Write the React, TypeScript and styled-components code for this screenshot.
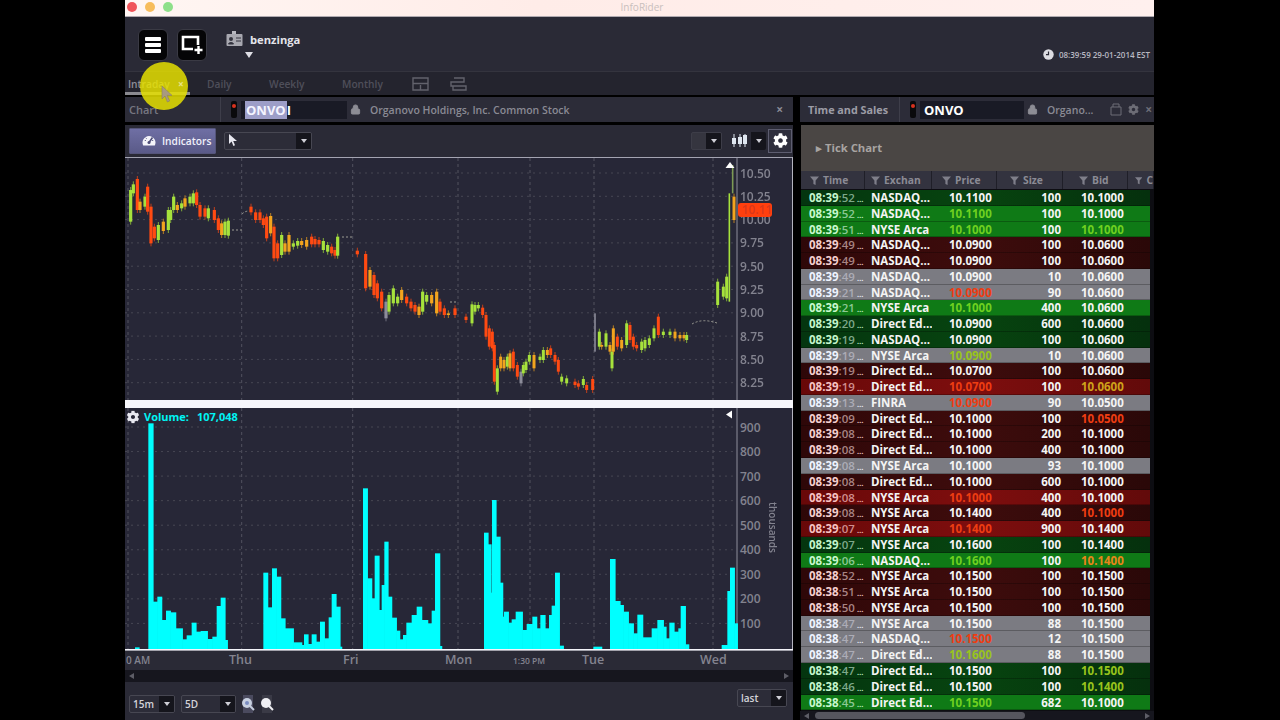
import React from "react";
import styled, { createGlobalStyle } from "styled-components";
import { Lock } from "lucide-react";
import { FaCog } from "react-icons/fa";

const Global = createGlobalStyle`
  html, body { margin: 0; padding: 0; background: #000; overflow: hidden; }
  body { font-family: "Open Sans", "Noto Sans", sans-serif; }
  * { box-sizing: border-box; }
`;

const Screen = styled.div`
  width: 1280px; height: 720px; background: #000; display: flex; justify-content: flex-start;
  padding-left: 125px; overflow: hidden; position: relative;
`;
const Win = styled.div`width: 1029px; height: 720px; display: flex; flex-direction: column; background: #000;`;

const TitleBar = styled.div`
  height: 17px; background: linear-gradient(90deg, #fff6f3, #ffece8 40%, #fff0ee); display: flex; align-items: center;
  position: relative; padding-left: 2px; gap: 8px; border-bottom: 1px solid #b0aab0;
`;
const Light = styled.span<{ $c: string }>`
  width: 10px; height: 10px; border-radius: 50%; background: ${p => p.$c}; filter: blur(.6px); margin-top: -2px;
`;
const WinTitle = styled.span`
  position: absolute; left: 0; right: 0; top: 0; text-align: center; font-size: 10px; line-height: 15px; color: #c9bfbd; padding-left: 5px;
`;

const Header = styled.div`
  height: 54px; background: #2a2a36; display: flex; align-items: flex-start; padding: 12px 4px 0 13px;
`;
const RoundBtn = styled.button`
  width: 30px; height: 32px; margin-right: 9px; border-radius: 6px; background: #050507; border: 1px solid #3a3a44;
  display: flex; align-items: center; justify-content: center; padding: 0;
`;
const Burger = styled.span`
  display: flex; flex-direction: column; gap: 2px;
  & > i { display: block; width: 16px; height: 4px; background: #fff; border-radius: 1px; }
`;
const User = styled.div`
  display: flex; flex-direction: column; margin-left: 10px; position: relative; padding-left: 24px; height: 30px;
`;
const UserRow = styled.span`
  font-weight: 700; font-size: 11.2px; line-height: 22px; color: #e4e4ea; position: relative;
`;
const IdIcon = styled.span`position: absolute; left: 0; top: 2px; line-height: 0;`;
const Drop = styled.span`
  width: 0; height: 0; border-left: 4px solid transparent; border-right: 4px solid transparent; border-top: 6px solid #dfdfe6; margin: 1px 0 0 -5px;
`;
const ClockBox = styled.div`
  margin-left: auto; display: flex; align-items: center; gap: 5px; color: #b9b9c2; font-size: 8px; padding-top: 20px; font-weight: 600;
`;

const Tabs = styled.div`
  height: 24px; background: #24242e; display: flex; align-items: center; position: relative; border-top: 1px solid #34343e;
  font-size: 10.2px; font-weight: 600;
`;
const Tab = styled.span<{ $w: number; $active?: boolean }>`
  width: ${p => p.$w}px; padding-left: 3px; color: ${p => (p.$active ? "#8f8f99" : "#4f4f5a")};
`;
const TabIcons = styled.span`display: flex; gap: 21px; margin-left: 11px; color: #62626c; line-height: 0;`;
const ActiveLine = styled.span`position: absolute; left: 0; bottom: 0; width: 65px; height: 3px; background: #8a8a90;`;

const Panes = styled.div`flex: 1; display: flex; margin-top: 2px; min-height: 0;`;
const LeftPane = styled.div`width: 668px; display: flex; flex-direction: column;`;
const RightPane = styled.div`width: 354px; margin-left: 7px; display: flex; flex-direction: column;`;

const PaneHead = styled.div`
  height: 25px; background: #2c2c38; display: flex; align-items: center; color: #83838d; font-size: 10.5px; font-weight: 600; margin-bottom: 3px;
`;
const PaneLabel = styled.span<{ $w: number; $bold?: boolean }>`
  width: ${p => p.$w}px; padding-left: ${p => (p.$bold ? 8 : 4)}px; height: 100%; line-height: 25px; border-right: 1px solid #3e3e4a;
  font-weight: ${p => (p.$bold ? 700 : 600)}; color: ${p => (p.$bold ? "#9c9ca6" : "#777781")};
  font-size: ${p => (p.$bold ? 10.8 : 11)}px;
`;
const Signal = styled.span`
  width: 6px; height: 17px; background: #0a0a0c; border-radius: 2px; margin: 0 4px 0 10px; display: flex; flex-direction: column; align-items: center; padding-top: 3px;
  &::before { content: ""; width: 4px; height: 4px; border-radius: 50%; background: #d8321e; }
`;
const SymInput = styled.div<{ $w: number }>`
  width: ${p => p.$w}px; height: 18px; background: #191a25; font-weight: 700; font-size: 13px; color: #fff; line-height: 18px; padding-left: 4px;
`;
const Selected = styled.span`background: #9d9ec8; color: #f4f4ff; padding: 0 1px;`;
const LockBox = styled.span`margin: 0 9px 0 3px; line-height: 0; color: #8d8d95;`;
const Company = styled.span`color: #8a8a94; font-size: 10.5px; white-space: nowrap;`;
const CloseX = styled.span`margin-left: auto; padding-right: 10px; color: #8a8a94; font-size: 12px; font-weight: 700;`;
const HeadIcons = styled.span`margin-left: auto; display: flex; gap: 6px; color: #6d6d76; align-items: center; padding-right: 2px; line-height: 0; font-size: 12px; font-weight: 700;`;

const Toolbar = styled.div`
  height: 32px; background: #2a2a36; display: flex; align-items: center; padding-left: 4px; padding-right: 1px; padding-bottom: 1px;
`;
const IndBtn = styled.button`
  width: 87px; height: 26px; border: 1px solid #55557a; background: linear-gradient(#6f6fa4, #5a5a88); color: #f0f0fa; font: 600 10.2px "Open Sans", sans-serif;
  display: flex; align-items: center; justify-content: flex-start; gap: 6px; padding: 0 0 0 12px; border-radius: 1px;
`;
const Sel = styled.div<{ $w: number; $dim?: boolean; $ml?: number }>`
  width: ${p => p.$w}px; height: 18px; border: 1px solid ${p => (p.$dim ? "#3d3d48" : "#474752")}; border-radius: 2px; background: ${p => (p.$dim ? "#35353f" : "#2c2c38")};
  display: flex; align-items: center; justify-content: space-between; color: #d4d4da; font-size: 10px; font-weight: 600; padding-left: 3px;
  overflow: hidden; flex: none; margin-left: ${p => p.$ml || 0}px;
`;
const SelPlain = styled(Sel)`border: 0; padding-left: 0; background: transparent;`;
const SelArrow = styled.span`
  width: 15px; height: 100%; background: #15151c; display: flex; align-items: center; justify-content: center;
  &::after { content: ""; border-left: 3px solid transparent; border-right: 3px solid transparent; border-top: 4px solid #cfcfd6; }
`;
const Spacer = styled.span`flex: 1;`;
const GearBtn = styled.span`
  width: 24px; height: 24px; margin-left: 2px; border: 1px solid #5d5d70; display: flex; align-items: center; justify-content: center; color: #fff; background: #2f2f3d;
`;

const Plot = styled.svg`display: block; flex: none; background: #272737;`;
const Splitter = styled.div`height: 8px; background: #f6f6fb;`;
const HScroll = styled.div<{ $h: number }>`
  height: ${p => p.$h}px; background: #16161e; display: flex; align-items: center; justify-content: space-between; padding: 0 4px; position: relative; flex: none;
`;
const Arrow = styled.span<{ $r?: boolean }>`
  border-top: 3px solid transparent; border-bottom: 3px solid transparent;
  ${p => (p.$r ? "border-left: 5px solid #5d5d66;" : "border-right: 5px solid #5d5d66;")}
`;
const Bottom = styled.div`
  flex: 1; background: #2a2a36; display: flex; padding: 7px 6px 0 4px; align-items: flex-start;
`;
const BottomLeft = styled.div`display: flex; align-items: center; gap: 6px; margin-top: 6px;`;
const ZoomIcons = styled.span`display: flex; gap: 3px; margin-left: -2px; line-height: 0;`;

const TickBar = styled.div`
  height: 46px; background: #4a4644; color: #a8a4a2; font-size: 11.3px; font-weight: 700; line-height: 45px; padding-left: 15px; margin-left: 1px;
`;
const ColHead = styled.div`
  height: 18px; background: #33333f; margin-left: 1px; display: grid; grid-template-columns: 64px 67px 65px 66px 65px 26px; color: #8b8b95;
  font-size: 10.3px; font-weight: 700;
`;
const ColCell = styled.div<{ $pad: number }>`
  display: flex; align-items: center; gap: 4px; padding-left: ${p => p.$pad}px; border-right: 1px solid #1f1f28; overflow: hidden; white-space: nowrap;
`;
const Rows = styled.div`background: #0d0d12; margin-left: 1px; flex: 1; padding: 1px 4px 0 0; overflow: hidden;`;

type Kind = "dg" | "bg" | "dr" | "br" | "gr";
const rowBg: Record<Kind, string> = {
  dg: "linear-gradient(90deg,#04350f,#07440f 50%,#05300d)",
  bg: "#0f7a16",
  dr: "linear-gradient(90deg,#2e0708,#3e0c0c 50%,#2a0808)",
  br: "linear-gradient(90deg,#680808,#7e0e0e 50%,#620a0a)",
  gr: "#7b7b82",
};
const timeCol: Record<Kind, string> = { dg: "#c4f5cc", bg: "#c8f8ce", dr: "#f4cfcf", br: "#f7c2c2", gr: "#eef3ff" };
const secCol: Record<Kind, string> = { dg: "#7ea88a", bg: "#8cc894", dr: "#a88484", br: "#d08e8e", gr: "#acacb6" };

const Row = styled.div<{ $k: Kind }>`
  height: 15.78px; background: ${p => rowBg[p.$k]}; display: grid; grid-template-columns: 64px 67px 65px 66px 65px; align-items: center;
  font-size: 11.5px; font-weight: 700; color: #f4f4f4; line-height: 15px; white-space: nowrap; border-bottom: 1px solid rgba(0,0,0,.25);
`;
const TimeCell = styled.span<{ $k: Kind }>`padding-left: 8px; color: ${p => timeCol[p.$k]};`;
const Sec = styled.span<{ $k: Kind }>`color: ${p => secCol[p.$k]}; font-weight: 600;`;
const Dots = styled.span`font-size: 7.5px; line-height: 1; margin-left: 2px;`;
const Exch = styled.span`padding-left: 6px; overflow: hidden;`;
const Num = styled.span<{ $c?: string; $pad: number }>`padding-left: ${p => p.$pad}px; color: ${p => p.$c || "inherit"};`;
const SizeCell = styled.span`text-align: right; padding-right: 2px;`;
const Thumb = styled.span`position: absolute; left: 15px; width: 210px; top: 1px; bottom: 1px; background: #55555e; border-radius: 5px;`;
const Highlight = styled.div`
  position: absolute; left: 140px; top: 62px; width: 48px; height: 48px; border-radius: 50%; background: rgba(232,226,0,.84); pointer-events: none;
`;
const TabX = styled.span`position: absolute; left: 178px; top: 77px; color: #e8e48a; font-size: 10px; font-weight: 700;`;
const Cursor = styled.svg`position: absolute; left: 21px; top: 24px;`;

const R = "#ff4a12", G = "#a6e23c", O = "#f2a41e", N = "#8c8c9a";
type C = [number, number, number, string];
const c5: C[] = [[17,105,200,G],[25,88,115,G],[37,72,165,R],[45,140,165,O],[60,125,155,G],[68,95,170,R],[78,155,265,R],[88,215,250,R],[100,210,255,G],[115,200,228,O],[130,165,225,G],[137,165,195,G],[146,125,165,G],[157,150,165,O],[170,145,160,G],[180,130,155,O],[195,125,145,G],[205,115,145,G],[215,112,150,R],[225,150,185,R],[240,160,185,R],[250,160,190,G],[268,165,195,R],[280,190,225,R],[290,205,240,O],[300,200,240,G],[310,197,242,G],[378,155,172,R],[392,172,195,R],[405,172,195,R],[415,190,210,R],[425,185,250,R],[437,183,235,O],[447,215,310,R],[458,265,310,R],[470,240,300,G],[480,265,290,O],[492,240,290,O],[505,265,275,G],[518,258,272,G],[530,258,270,O],[545,255,275,O],[560,245,268,R],[570,252,268,R],[582,255,268,R],[595,258,285,G],[608,270,290,G],[620,275,295,R],[630,285,302,R],[638,245,302,G],[697,287,298,R],[722,297,400,R],[735,345,395,O],[747,360,420,R],[757,385,430,R],[770,410,460,R],[783,440,490,N],[792,420,470,G],[805,400,445,G],[818,425,445,G],[830,405,435,O],[845,425,445,R],[858,440,460,R],[870,450,470,R],[882,455,480,O],[893,410,470,G],[905,420,440,G],[920,420,445,O],[935,410,475,O],[945,440,470,R],[958,460,480,R],[970,475,480,O],[990,460,480,R]];
const c6: C[] = [[18,485,495,R],[36,448,505,G],[45,450,470,G],[55,450,460,G],[68,458,480,R],[78,480,545,R],[88,520,575,R],[97,530,580,R],[103,570,680,R],[112,640,710,G],[122,605,640,O],[132,615,640,O],[142,605,635,G],[150,595,640,O],[160,590,640,R],[172,630,665,R],[183,650,685,N],[190,630,655,G],[198,620,645,G],[208,600,620,G],[222,600,640,O],[240,605,615,G],[250,585,615,G],[262,585,600,O],[272,580,600,R],[285,600,620,R],[295,615,650,R],[305,665,680,G],[320,670,685,G],[345,680,690,R],[355,685,695,R],[370,672,690,G],[380,690,705,R],[398,672,705,R],[405,475,590,N],[418,530,575,G],[425,570,575,O],[438,535,575,G],[450,570,590,O],[456,590,640,G],[460,520,590,O],[472,545,575,R],[485,555,580,O],[500,505,570,G],[510,510,555,R],[520,545,575,R],[530,570,580,R],[545,560,585,G],[555,555,580,G],[568,550,570,G],[582,520,550,G],[595,485,540,R],[610,530,540,G],[630,530,540,G],[645,530,550,O],[660,540,550,O],[672,540,550,O],[680,540,555,G],[773,380,450,G],[790,395,425,G],[800,365,430,G],[808,115,440,G],[818,30,115,"#7d9a55"],[822,125,195,O]];

type B = [number, number, number];
const b7: B[] = [[70,84,70],[84,97,605],[97,110,590],[110,123,660],[123,136,632],[136,152,637],[152,172,685],[172,185,718],[185,200,706],[200,213,668],[213,227,695],[227,247,693],[247,262,717],[262,275,710],[275,287,618],[287,300,593],[300,307,720],[30,42,742],[415,428,518],[428,441,622],[441,454,505],[454,467,530],[467,480,655],[480,505,685],[505,530,727],[530,537,735],[537,549,703],[549,560,732],[560,573,703],[573,585,725],[585,598,665],[598,611,715],[611,620,652],[620,633,582],[633,645,620],[645,650,740],[714,727,265],[727,740,535],[740,749,595],[749,762,467],[762,770,630],[770,778,555],[778,789,425],[789,800,590],[800,814,653],[814,824,692],[824,834,718],[834,844,705],[844,860,668],[860,875,645],[875,890,620],[890,908,660],[908,920,670],[920,930,632],[930,944,460],[944,950,738]];
const b8: B[] = [[72,84,398],[84,93,433],[93,96,578],[96,108,300],[108,120,410],[120,128,548],[128,132,650],[132,145,635],[145,155,668],[155,167,658],[167,187,635],[187,200,690],[200,217,672],[217,230,650],[230,241,685],[241,255,645],[255,267,685],[267,275,645],[275,285,617],[285,298,518],[298,310,737],[400,425,740],[450,465,477],[465,480,603],[480,490,615],[490,505,635],[505,520,670],[520,532,700],[532,548,644],[548,575,712],[575,592,685],[592,610,660],[610,618,680],[618,628,715],[628,642,668],[642,655,695],[655,662,685],[662,676,618],[676,686,733],[785,802,735],[802,810,573],[810,823,503],[823,832,670]];

const vX = [128, 241.7, 352.7, 458, 530, 594, 713];
const priceLv = ["10.50","10.25","10.00","9.75","9.50","9.25","9.00","8.75","8.50","8.25"];
const volLv = [900,800,700,600,500,400,300,200,100];
const days: [string, number, number][] = [["0 AM",126,10],["Thu",229,12.5],["Fri",343,12.5],["Mon",445,12.5],["Tue",582,12.5],["Wed",700,12.5]];

const AxisText = styled.text`font: 600 12px "Open Sans", sans-serif; fill: #83838f;`;
const Candles = styled.g`filter: blur(.35px);`;
const VolLabel = styled.text`font: 700 11px "Open Sans", sans-serif; fill: #00f4f4;`;

function PriceChart() {
  return (
    <Plot width={668} height={243} viewBox="125 157 668 243">
      <line x1={125} x2={793} y1={157.5} y2={157.5} stroke="#a4a4b2" />
      {priceLv.map((_, i) => (
        <line key={i} x1={125} x2={737} y1={173 + i * 23.3} y2={173 + i * 23.3} stroke="#474753" strokeDasharray="2 4" />
      ))}
      {vX.map(x => <line key={x} x1={x} x2={x} y1={158} y2={400} stroke="#52525f" strokeDasharray="3 3" />)}
      <line x1={737} x2={737} y1={158} y2={400} stroke="#8f8f9c" />
      <line x1={792.5} x2={792.5} y1={157} y2={400} stroke="#b4b4c0" />
      <path d="M242 214q3-3 7-3M232 230h10M342 237h10M450 302h8M692 324q10-6 25-1" stroke="#9c9c94" fill="none" strokeDasharray="2 2" />
      <Candles>
        {c5.map(([x, a, b, col], i) => (
          <g key={i}>
            <rect x={125 + x / 3 - .5} width={1} y={155 + a / 3 - 3} height={(b - a) / 3 + 6} fill={col} opacity={.7} />
            <rect x={125 + x / 3 - 1.6} width={3.2} y={155 + a / 3} height={(b - a) / 3} fill={col} />
          </g>
        ))}
        {c6.map(([x, a, b, col], i) => {
          const thin = x === 808 || x === 818 || x === 405;
          return (
            <g key={i}>
              {!thin && <rect x={460 + x / 3 - .5} width={1} y={155 + a / 3 - 3} height={(b - a) / 3 + 6} fill={col} opacity={.7} />}
              <rect x={460 + x / 3 - (thin ? .8 : 1.5)} width={thin ? 1.6 : 3} y={155 + a / 3} height={(b - a) / 3} fill={col} />
            </g>
          );
        })}
      </Candles>
      <path d="M725.5 168l4.5 -6 4.5 6z" fill="#fff" />
      {priceLv.map((t, i) => <AxisText key={t} x={740} y={177.5 + i * 23.3}>{t}</AxisText>)}
      <rect x={738} y={203} width={34} height={14} rx={3} fill="#ff3f0e" />
      <AxisText x={742} y={214} style={{ fill: "#d8381a" }}>10.11</AxisText>
    </Plot>
  );
}

function VolumeChart() {
  return (
    <Plot width={668} height={262} viewBox="125 408 668 262">
      <rect x={125} y={650} width={668} height={20} fill="#2a2a36" />
      {volLv.map((_, i) => (
        <line key={i} x1={125} x2={737} y1={427 + i * 24.55} y2={427 + i * 24.55} stroke="#474753" strokeDasharray="2 4" />
      ))}
      {vX.map(x => <line key={x} x1={x} x2={x} y1={408} y2={650} stroke="#52525f" strokeDasharray="3 3" />)}
      <line x1={737} x2={737} y1={408} y2={650} stroke="#8f8f9c" />
      <line x1={792.5} x2={792.5} y1={408} y2={650} stroke="#b4b4c0" />
      {b7.map(([a, b, t], i) => <rect key={i} x={125 + a / 3} width={(b - a) / 3 + .6} y={400 + t / 3} height={649.5 - 400 - t / 3} fill="#00ffff" />)}
      {b8.map(([a, b, t], i) => <rect key={i} x={460 + a / 3} width={(b - a) / 3 + .6} y={400 + t / 3} height={649.5 - 400 - t / 3} fill="#00ffff" />)}
      <rect x={125} y={649} width={668} height={1.6} fill="#f4f4fa" />
      <path d="M732 410.5v8l-6 -4z" fill="#fff" />
      {volLv.map((t, i) => <AxisText key={t} x={740} y={431.5 + i * 24.55}>{t}</AxisText>)}
      <AxisText x={0} y={0} transform="translate(769 502) rotate(90)" style={{ fontSize: 10 }}>thousands</AxisText>
      {days.map(([t, x, s]) => <AxisText key={t} x={x} y={664} style={{ fontSize: s }}>{t}</AxisText>)}
      <AxisText x={513} y={664} style={{ fontSize: 8.5 }}>1:30 PM</AxisText>
      <g transform="translate(126.5 410.5)" color="#e8e8f0">
        <FaCog x={0} y={0} size={13} />
      </g>
      <VolLabel x={144} y={421}>Volume:</VolLabel>
      <VolLabel x={197} y={421}>107,048</VolLabel>
    </Plot>
  );
}

const Funnel = () => (
  <svg width="9" height="9" viewBox="0 0 9 9"><path d="M0 .5h9L5.6 4.6V9L3.4 8V4.6z" fill="#7f7f8a" /></svg>
);

type RowD = [string, string, string, string, string, string, Kind, string?, string?];
const NAS = "NASDAQ…", NY = "NYSE Arca", DE = "Direct Ed…";
const rg = "#ee3d12", gn = "#6ed020", ol = "#98c41c", am = "#cfa21a", or = "#e8861a";
const rows: RowD[] = [
  ["08:39","52",NAS,"10.1100","100","10.1000","dg"],
  ["08:39","52",NAS,"10.1100","100","10.1000","bg",gn],
  ["08:39","51",NY,"10.1000","100","10.1000","bg",gn,gn],
  ["08:39","49",NAS,"10.0900","100","10.0600","dr"],
  ["08:39","49",NAS,"10.0900","100","10.0600","dr"],
  ["08:39","49",NAS,"10.0900","10","10.0600","gr"],
  ["08:39","21",NAS,"10.0900","90","10.0600","gr",rg],
  ["08:39","21",NY,"10.1000","400","10.0600","bg",gn],
  ["08:39","20",DE,"10.0900","600","10.0600","dg"],
  ["08:39","19",NAS,"10.0900","100","10.0600","dg"],
  ["08:39","19",NY,"10.0900","10","10.0600","gr",ol],
  ["08:39","19",DE,"10.0700","100","10.0600","dr"],
  ["08:39","19",DE,"10.0700","100","10.0600","br",rg,am],
  ["08:39","13","FINRA","10.0900","90","10.0500","gr",rg],
  ["08:39","09",DE,"10.1000","100","10.0500","dr",undefined,rg],
  ["08:39","08",DE,"10.1000","200","10.1000","dr"],
  ["08:39","08",DE,"10.1000","400","10.1000","dr"],
  ["08:39","08",NY,"10.1000","93","10.1000","gr"],
  ["08:39","08",DE,"10.1000","600","10.1000","dr"],
  ["08:39","08",NY,"10.1000","400","10.1000","br",rg],
  ["08:39","08",NY,"10.1400","400","10.1000","dr",undefined,rg],
  ["08:39","07",NY,"10.1400","900","10.1400","br",rg],
  ["08:39","07",NY,"10.1600","100","10.1400","dg"],
  ["08:39","06",NAS,"10.1600","100","10.1400","bg",gn,or],
  ["08:38","52",NY,"10.1500","100","10.1500","dr"],
  ["08:38","51",NY,"10.1500","100","10.1500","dr"],
  ["08:38","50",NY,"10.1500","100","10.1500","dr"],
  ["08:38","47",NY,"10.1500","88","10.1500","gr"],
  ["08:38","47",NAS,"10.1500","12","10.1500","gr",rg],
  ["08:38","47",DE,"10.1600","88","10.1500","gr",ol],
  ["08:38","47",DE,"10.1500","100","10.1500","dg",undefined,ol],
  ["08:38","46",DE,"10.1500","100","10.1400","dg",undefined,ol],
  ["08:38","45",DE,"10.1500","682","10.1000","bg",gn],
];

export default function App() {
  return (
    <Screen>
      <Global />
      <Win>
        <TitleBar>
          <Light $c="#f0555a" /><Light $c="#f7bd5c" /><Light $c="#8ee08a" />
          <WinTitle>InfoRider</WinTitle>
        </TitleBar>
        <Header>
          <RoundBtn><Burger><i /><i /><i /></Burger></RoundBtn>
          <RoundBtn>
            <svg width="24" height="20" viewBox="0 0 24 20">
              <path d="M3 2h15v12H3z" fill="none" stroke="#fff" strokeWidth="2.6" />
              <rect x="13" y="10" width="11" height="10" fill="#050507" />
              <path d="M18.5 11v8M14.5 15h8" stroke="#fff" strokeWidth="2.4" />
            </svg>
          </RoundBtn>
          <User>
            <IdIcon>
              <svg width="17" height="16" viewBox="0 0 17 16">
                <path d="M6 0h4v3H6z" fill="#b8b8c0" />
                <rect x=".5" y="3" width="16" height="12" rx="1" fill="#a8a8b0" />
                <circle cx="5" cy="8" r="2" fill="#33333e" />
                <path d="M2.5 13c.5-2 4.5-2 5 0zM10 7h5M10 10h5" stroke="#33333e" fill="#33333e" />
              </svg>
            </IdIcon>
            <UserRow>benzinga</UserRow>
            <Drop />
          </User>
          <ClockBox>
            <svg width="11" height="11" viewBox="0 0 11 11">
              <circle cx="5.5" cy="5.5" r="5.2" fill="#dcdce2" />
              <path d="M5.5 2.4v3.2H3" stroke="#2a2a36" strokeWidth="1.2" fill="none" />
            </svg>
            08:39:59 29-01-2014 EST
          </ClockBox>
        </Header>
        <Tabs>
          <Tab $w={79} $active>Intraday</Tab>
          <Tab $w={62}>Daily</Tab>
          <Tab $w={73}>Weekly</Tab>
          <Tab $w={62}>Monthly</Tab>
          <TabIcons>
            <svg width="17" height="14" viewBox="0 0 17 14"><path d="M1 1h15v12H1zM1 6.5h15M8.5 8v5" fill="none" stroke="currentColor" strokeWidth="1.4" /></svg>
            <svg width="17" height="14" viewBox="0 0 17 14"><path d="M4 1h10v4H1v4h15v4H3V9" fill="none" stroke="currentColor" strokeWidth="1.4" /></svg>
          </TabIcons>
          <ActiveLine />
        </Tabs>
        <Panes>
          <LeftPane>
            <PaneHead>
              <PaneLabel $w={96}>Chart</PaneLabel>
              <Signal />
              <SymInput $w={106}><Selected>ONVO</Selected>I</SymInput>
              <LockBox><Lock size={11} fill="currentColor" /></LockBox>
              <Company>Organovo Holdings, Inc. Common Stock</Company>
              <CloseX>×</CloseX>
            </PaneHead>
            <Toolbar>
              <IndBtn>
                <svg width="14" height="13" viewBox="0 0 14 13">
                  <path d="M1.2 11.5A6.5 6.5 0 1 1 12.8 11.5z" fill="#f4f4fa" />
                  <path d="M7 8.5L10.5 3.5" stroke="#4d4d78" strokeWidth="1.6" />
                  <circle cx="7" cy="8.5" r="1.5" fill="#4d4d78" />
                  <path d="M2.8 6.5h1M3.8 4l.8.6M10.2 6.5h1" stroke="#4d4d78" />
                </svg>
                Indicators
              </IndBtn>
              <Sel $w={88} $ml={8}>
                <svg width="10" height="13" viewBox="0 0 10 13"><path d="M1 0v10l2.6-2.4L5.4 12l1.6-.7-1.8-4.2H9z" fill="#e8e8f0" /></svg>
                <SelArrow />
              </Sel>
              <Spacer />
              <Sel $w={31} $dim><span /><SelArrow /></Sel>
              <SelPlain $w={35} $ml={9}>
                <svg width="17" height="13" viewBox="0 0 17 13">
                  <path d="M3 0v13M9 0v13M14 0v13" stroke="#dfe7f0" />
                  <path d="M1 4h4v6H1zM7 3h4v7H7zM12 1h4v9h-4z" fill="#dfe7f0" />
                </svg>
                <SelArrow />
              </SelPlain>
              <GearBtn><FaCog size={15} /></GearBtn>
            </Toolbar>
            <PriceChart />
            <Splitter />
            <VolumeChart />
            <HScroll $h={12}><Arrow /><Arrow $r /></HScroll>
            <Bottom>
              <BottomLeft>
                <Sel $w={46}>15m<SelArrow /></Sel>
                <Sel $w={55}>5D<SelArrow /></Sel>
                <ZoomIcons>
                  <svg width="16" height="18" viewBox="0 0 16 18"><rect x="3" y="0" width="10" height="18" fill="#4a4a5e" /><circle cx="7" cy="8" r="5" fill="#c8d0e0" /><circle cx="7" cy="8" r="2" fill="#7a8cc0" /><path d="M10 11l4 4" stroke="#c8d0e0" strokeWidth="2" /></svg>
                  <svg width="16" height="18" viewBox="0 0 16 18"><rect x="3" y="0" width="10" height="18" fill="#3a3a46" /><circle cx="7" cy="8" r="5" fill="#f0f0f4" /><path d="M10 11l4 4" stroke="#f0f0f4" strokeWidth="2" /></svg>
                </ZoomIcons>
              </BottomLeft>
              <Spacer />
              <Sel $w={50}>last<SelArrow /></Sel>
            </Bottom>
          </LeftPane>
          <RightPane>
            <PaneHead>
              <PaneLabel $w={100} $bold>Time and Sales</PaneLabel>
              <Signal />
              <SymInput $w={104}>ONVO</SymInput>
              <LockBox><Lock size={11} fill="currentColor" /></LockBox>
              <Company>Organo...</Company>
              <HeadIcons>
                <svg width="12" height="13" viewBox="0 0 12 13"><path d="M3 4V1h6v3M1 4h10v8H1z" fill="none" stroke="currentColor" /></svg>
                <FaCog size={11} />
                ×
              </HeadIcons>
            </PaneHead>
            <TickBar>▸ Tick Chart</TickBar>
            <ColHead>
              <ColCell $pad={9}><Funnel />Time</ColCell>
              <ColCell $pad={6}><Funnel />Exchan</ColCell>
              <ColCell $pad={10}><Funnel />Price</ColCell>
              <ColCell $pad={13}><Funnel />Size</ColCell>
              <ColCell $pad={16}><Funnel />Bid</ColCell>
              <ColCell $pad={7}><Funnel />C</ColCell>
            </ColHead>
            <Rows>
              {rows.map(([h, s, ex, pr, sz, bid, k, pc, bc], i) => (
                <Row key={i} $k={k}>
                  <TimeCell $k={k}>{h}<Sec $k={k}>:{s}</Sec><Dots>…</Dots></TimeCell>
                  <Exch>{ex}</Exch>
                  <Num $c={pc} $pad={17}>{pr}</Num>
                  <SizeCell>{sz}</SizeCell>
                  <Num $c={bc} $pad={18}>{bid}</Num>
                </Row>
              ))}
            </Rows>
            <HScroll $h={9}><Arrow /><Thumb /><Arrow $r /></HScroll>
          </RightPane>
        </Panes>
      </Win>
      <Highlight>
        <Cursor width="12" height="17" viewBox="0 0 12 17"><path d="M1 0v13l3-3 2.4 6 2.2-1-2.4-5.6H11z" fill="#a89a80" stroke="#8a8060" strokeWidth=".6" /></Cursor>
      </Highlight>
      <TabX>×</TabX>
    </Screen>
  );
}
